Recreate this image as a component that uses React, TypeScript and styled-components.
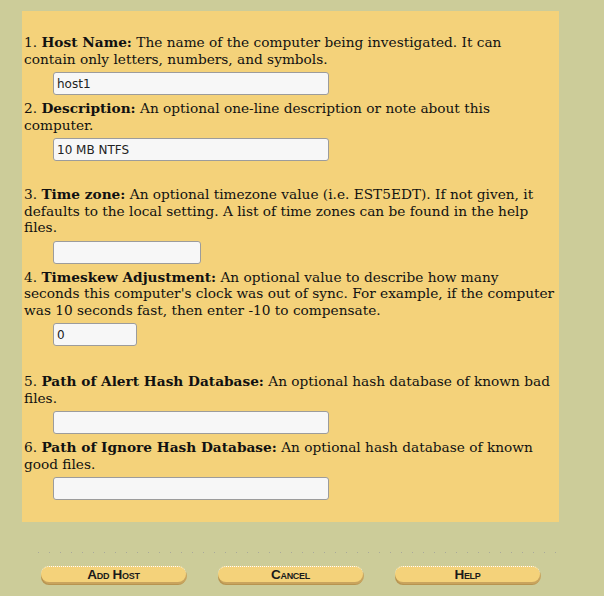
import React from 'react';
import styled, { createGlobalStyle } from 'styled-components';

const GlobalStyle = createGlobalStyle`
  html, body {
    margin: 0;
    padding: 0;
    background-color: #cccc99;
  }
  body {
    font-family: 'DejaVu Serif', serif;
    color: #111;
  }
`;

const Page = styled.div`
  width: 604px;
  min-height: 596px;
  padding-top: 11px;
  box-sizing: border-box;
`;

const Panel = styled.form`
  width: 537px;
  margin-left: 22px;
  background-color: #f4d27a;
  padding: 23px 2px 17px 2px;
  box-sizing: border-box;
`;

const Field = styled.div<{ $gap?: number }>`
  margin-top: ${(p) => p.$gap || 0}px;
`;

const Desc = styled.div`
  font-size: 13.7px;
  line-height: 16.5px;
  padding-right: 1px;

  b {
    font-weight: bold;
  }
`;

const InputRow = styled.div`
  padding: 5px 0 5px 29px;
  display: flex;
`;

const TextInput = styled.input<{ $w: number }>`
  width: ${(p) => p.$w}px;
  height: 23px;
  box-sizing: border-box;
  margin: 0;
  padding: 0 3px;
  background-color: #f7f7f7;
  border: 1px solid #9c9c9c;
  border-radius: 3px;
  font-family: 'DejaVu Sans', sans-serif;
  font-size: 12px;
  color: #222;
  outline: none;
`;

const Footer = styled.div`
  padding: 30px 0 0 38px;
  width: 518px;
`;

const DotLine = styled.div`
  height: 1px;
  background-image: repeating-linear-gradient(
    to right,
    #a9a99a 0 1px,
    transparent 1px 11px
  );
`;

const ButtonBar = styled.div`
  display: grid;
  grid-template-columns: repeat(3, 177px);
  margin-left: -13px;
  padding-top: 13px;
`;

const ImgButton = styled.button`
  justify-self: center;
  width: 145px;
  height: 16px;
  padding: 0;
  border: none;
  border-top: 1px dotted #fff;
  border-radius: 8px;
  background-color: #f4d27a;
  box-shadow: 1px 2px 0 #c8a45e, 0 3px 0 #b8944f;
  font-family: 'Liberation Sans', sans-serif;
  font-weight: bold;
  font-size: 13.5px;
  font-variant: small-caps;
  letter-spacing: -0.3px;
  line-height: 14px;
  color: #1a1a1a;
  cursor: pointer;
`;

const fields = [
  {
    n: 1,
    title: 'Host Name:',
    text: 'The name of the computer being investigated. It can contain only letters, numbers, and symbols.',
    value: 'host1',
    w: 276,
    gap: 0,
  },
  {
    n: 2,
    title: 'Description:',
    text: 'An optional one-line description or note about this computer.',
    value: '10 MB NTFS',
    w: 276,
    gap: 0,
  },
  {
    n: 3,
    title: 'Time zone:',
    text: 'An optional timezone value (i.e. EST5EDT). If not given, it defaults to the local setting. A list of time zones can be found in the help files.',
    value: '',
    w: 148,
    gap: 20,
  },
  {
    n: 4,
    title: 'Timeskew Adjustment:',
    text: "An optional value to describe how many seconds this computer's clock was out of sync. For example, if the computer was 10 seconds fast, then enter -10 to compensate.",
    value: '0',
    w: 84,
    gap: 0,
  },
  {
    n: 5,
    title: 'Path of Alert Hash Database:',
    text: 'An optional hash database of known bad files.',
    value: '',
    w: 276,
    gap: 22,
  },
  {
    n: 6,
    title: 'Path of Ignore Hash Database:',
    text: 'An optional hash database of known good files.',
    value: '',
    w: 276,
    gap: 0,
  },
];

export default function App() {
  return (
    <Page>
      <GlobalStyle />
      <Panel onSubmit={(e) => e.preventDefault()}>
        {fields.map((f) => (
          <Field key={f.n} $gap={f.gap}>
            <Desc>
              {f.n}. <b>{f.title}</b> {f.text}
            </Desc>
            <InputRow>
              <TextInput $w={f.w} defaultValue={f.value} />
            </InputRow>
          </Field>
        ))}
      </Panel>
      <Footer>
        <DotLine />
        <ButtonBar>
          <ImgButton>Add Host</ImgButton>
          <ImgButton>Cancel</ImgButton>
          <ImgButton>Help</ImgButton>
        </ButtonBar>
      </Footer>
    </Page>
  );
}
